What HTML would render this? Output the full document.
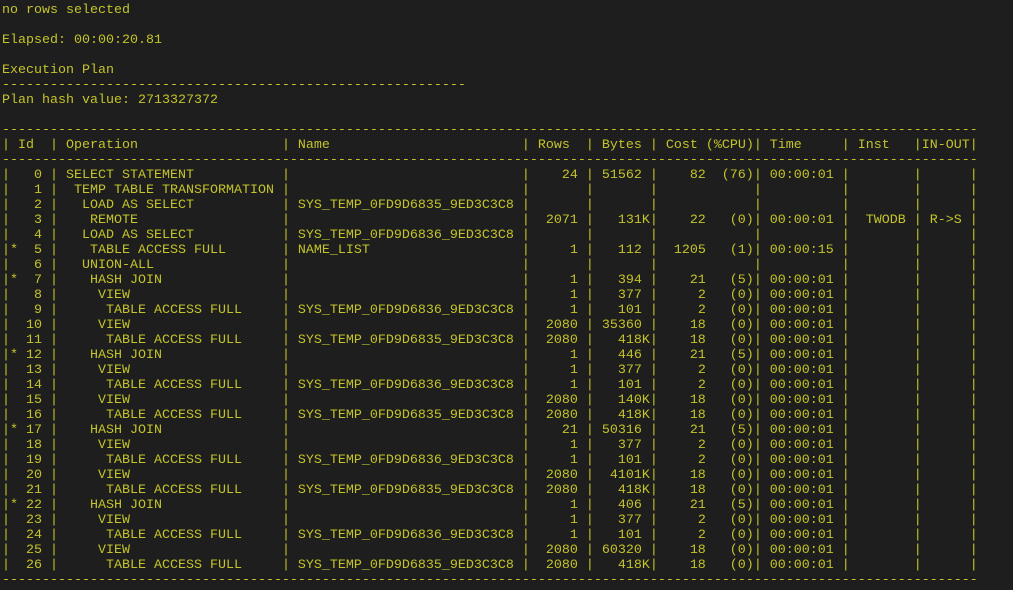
<!DOCTYPE html>
<html><head><meta charset="utf-8"><style>
html,body{margin:0;padding:0;background:#1e1e1e;width:1013px;height:590px;overflow:hidden}
pre{margin:0;padding:3px 0 0 2px;font-family:"Liberation Mono",monospace;font-size:13.333px;line-height:15px;color:#c4c42a;white-space:pre}
i{font-style:normal;display:inline-block;white-space:pre;vertical-align:top}
.o{width:28ch}.n{width:29ch}.r{width:7ch;text-align:right}.b{width:7ch;text-align:right}.c{width:12ch;text-align:right}.t{width:10ch}.s{width:8ch}.x{width:6ch}
</style></head><body><pre>no rows selected

Elapsed: 00:00:20.81

Execution Plan
----------------------------------------------------------
Plan hash value: 2713327372

--------------------------------------------------------------------------------------------------------------------------
| Id  |<i class="o"> Operation</i>|<i class="n"> Name</i>|<i class="r"> Rows  </i>|<i class="b"> Bytes </i>|<i class="c"> Cost (%CPU)</i>|<i class="t"> Time</i>|<i class="s"> Inst</i>|<i class="x">IN-OUT</i>|
--------------------------------------------------------------------------------------------------------------------------
|   0 |<i class="o"> SELECT STATEMENT</i>|<i class="n"></i>|<i class="r">24 </i>|<i class="b">51562 </i>|<i class="c">82  (76)</i>|<i class="t"> 00:00:01</i>|<i class="s"></i>|<i class="x"></i>|
|   1 |<i class="o">  TEMP TABLE TRANSFORMATION</i>|<i class="n"></i>|<i class="r"></i>|<i class="b"></i>|<i class="c"></i>|<i class="t"></i>|<i class="s"></i>|<i class="x"></i>|
|   2 |<i class="o">   LOAD AS SELECT</i>|<i class="n"> SYS_TEMP_0FD9D6835_9ED3C3C8</i>|<i class="r"></i>|<i class="b"></i>|<i class="c"></i>|<i class="t"></i>|<i class="s"></i>|<i class="x"></i>|
|   3 |<i class="o">    REMOTE</i>|<i class="n"></i>|<i class="r">2071 </i>|<i class="b">131K</i>|<i class="c">22   (0)</i>|<i class="t"> 00:00:01</i>|<i class="s">  TWODB</i>|<i class="x"> R-&gt;S</i>|
|   4 |<i class="o">   LOAD AS SELECT</i>|<i class="n"> SYS_TEMP_0FD9D6836_9ED3C3C8</i>|<i class="r"></i>|<i class="b"></i>|<i class="c"></i>|<i class="t"></i>|<i class="s"></i>|<i class="x"></i>|
|*  5 |<i class="o">    TABLE ACCESS FULL</i>|<i class="n"> NAME_LIST</i>|<i class="r">1 </i>|<i class="b">112 </i>|<i class="c">1205   (1)</i>|<i class="t"> 00:00:15</i>|<i class="s"></i>|<i class="x"></i>|
|   6 |<i class="o">   UNION-ALL</i>|<i class="n"></i>|<i class="r"></i>|<i class="b"></i>|<i class="c"></i>|<i class="t"></i>|<i class="s"></i>|<i class="x"></i>|
|*  7 |<i class="o">    HASH JOIN</i>|<i class="n"></i>|<i class="r">1 </i>|<i class="b">394 </i>|<i class="c">21   (5)</i>|<i class="t"> 00:00:01</i>|<i class="s"></i>|<i class="x"></i>|
|   8 |<i class="o">     VIEW</i>|<i class="n"></i>|<i class="r">1 </i>|<i class="b">377 </i>|<i class="c">2   (0)</i>|<i class="t"> 00:00:01</i>|<i class="s"></i>|<i class="x"></i>|
|   9 |<i class="o">      TABLE ACCESS FULL</i>|<i class="n"> SYS_TEMP_0FD9D6836_9ED3C3C8</i>|<i class="r">1 </i>|<i class="b">101 </i>|<i class="c">2   (0)</i>|<i class="t"> 00:00:01</i>|<i class="s"></i>|<i class="x"></i>|
|  10 |<i class="o">     VIEW</i>|<i class="n"></i>|<i class="r">2080 </i>|<i class="b">35360 </i>|<i class="c">18   (0)</i>|<i class="t"> 00:00:01</i>|<i class="s"></i>|<i class="x"></i>|
|  11 |<i class="o">      TABLE ACCESS FULL</i>|<i class="n"> SYS_TEMP_0FD9D6835_9ED3C3C8</i>|<i class="r">2080 </i>|<i class="b">418K</i>|<i class="c">18   (0)</i>|<i class="t"> 00:00:01</i>|<i class="s"></i>|<i class="x"></i>|
|* 12 |<i class="o">    HASH JOIN</i>|<i class="n"></i>|<i class="r">1 </i>|<i class="b">446 </i>|<i class="c">21   (5)</i>|<i class="t"> 00:00:01</i>|<i class="s"></i>|<i class="x"></i>|
|  13 |<i class="o">     VIEW</i>|<i class="n"></i>|<i class="r">1 </i>|<i class="b">377 </i>|<i class="c">2   (0)</i>|<i class="t"> 00:00:01</i>|<i class="s"></i>|<i class="x"></i>|
|  14 |<i class="o">      TABLE ACCESS FULL</i>|<i class="n"> SYS_TEMP_0FD9D6836_9ED3C3C8</i>|<i class="r">1 </i>|<i class="b">101 </i>|<i class="c">2   (0)</i>|<i class="t"> 00:00:01</i>|<i class="s"></i>|<i class="x"></i>|
|  15 |<i class="o">     VIEW</i>|<i class="n"></i>|<i class="r">2080 </i>|<i class="b">140K</i>|<i class="c">18   (0)</i>|<i class="t"> 00:00:01</i>|<i class="s"></i>|<i class="x"></i>|
|  16 |<i class="o">      TABLE ACCESS FULL</i>|<i class="n"> SYS_TEMP_0FD9D6835_9ED3C3C8</i>|<i class="r">2080 </i>|<i class="b">418K</i>|<i class="c">18   (0)</i>|<i class="t"> 00:00:01</i>|<i class="s"></i>|<i class="x"></i>|
|* 17 |<i class="o">    HASH JOIN</i>|<i class="n"></i>|<i class="r">21 </i>|<i class="b">50316 </i>|<i class="c">21   (5)</i>|<i class="t"> 00:00:01</i>|<i class="s"></i>|<i class="x"></i>|
|  18 |<i class="o">     VIEW</i>|<i class="n"></i>|<i class="r">1 </i>|<i class="b">377 </i>|<i class="c">2   (0)</i>|<i class="t"> 00:00:01</i>|<i class="s"></i>|<i class="x"></i>|
|  19 |<i class="o">      TABLE ACCESS FULL</i>|<i class="n"> SYS_TEMP_0FD9D6836_9ED3C3C8</i>|<i class="r">1 </i>|<i class="b">101 </i>|<i class="c">2   (0)</i>|<i class="t"> 00:00:01</i>|<i class="s"></i>|<i class="x"></i>|
|  20 |<i class="o">     VIEW</i>|<i class="n"></i>|<i class="r">2080 </i>|<i class="b">4101K</i>|<i class="c">18   (0)</i>|<i class="t"> 00:00:01</i>|<i class="s"></i>|<i class="x"></i>|
|  21 |<i class="o">      TABLE ACCESS FULL</i>|<i class="n"> SYS_TEMP_0FD9D6835_9ED3C3C8</i>|<i class="r">2080 </i>|<i class="b">418K</i>|<i class="c">18   (0)</i>|<i class="t"> 00:00:01</i>|<i class="s"></i>|<i class="x"></i>|
|* 22 |<i class="o">    HASH JOIN</i>|<i class="n"></i>|<i class="r">1 </i>|<i class="b">406 </i>|<i class="c">21   (5)</i>|<i class="t"> 00:00:01</i>|<i class="s"></i>|<i class="x"></i>|
|  23 |<i class="o">     VIEW</i>|<i class="n"></i>|<i class="r">1 </i>|<i class="b">377 </i>|<i class="c">2   (0)</i>|<i class="t"> 00:00:01</i>|<i class="s"></i>|<i class="x"></i>|
|  24 |<i class="o">      TABLE ACCESS FULL</i>|<i class="n"> SYS_TEMP_0FD9D6836_9ED3C3C8</i>|<i class="r">1 </i>|<i class="b">101 </i>|<i class="c">2   (0)</i>|<i class="t"> 00:00:01</i>|<i class="s"></i>|<i class="x"></i>|
|  25 |<i class="o">     VIEW</i>|<i class="n"></i>|<i class="r">2080 </i>|<i class="b">60320 </i>|<i class="c">18   (0)</i>|<i class="t"> 00:00:01</i>|<i class="s"></i>|<i class="x"></i>|
|  26 |<i class="o">      TABLE ACCESS FULL</i>|<i class="n"> SYS_TEMP_0FD9D6835_9ED3C3C8</i>|<i class="r">2080 </i>|<i class="b">418K</i>|<i class="c">18   (0)</i>|<i class="t"> 00:00:01</i>|<i class="s"></i>|<i class="x"></i>|
--------------------------------------------------------------------------------------------------------------------------
</pre></body></html>
